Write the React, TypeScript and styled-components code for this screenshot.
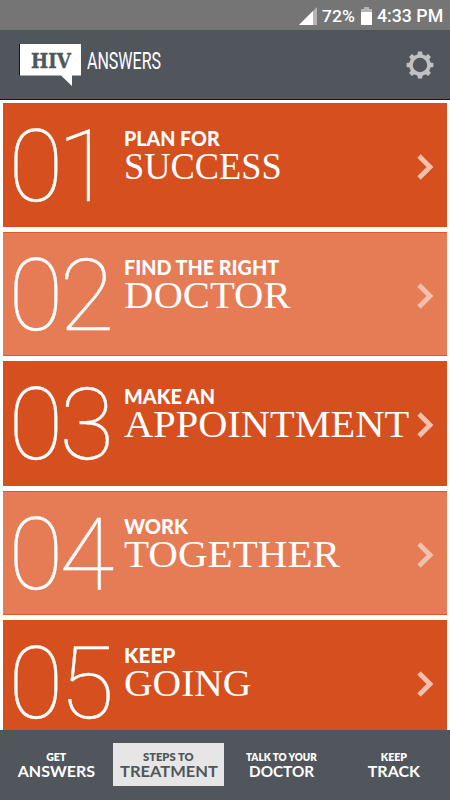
import React, { useLayoutEffect, useRef, useState } from "react";
import styled, { createGlobalStyle } from "styled-components";

const GlobalStyle = createGlobalStyle`
  * { box-sizing: border-box; }
  body { margin: 0; background: #fff; overflow: hidden; }
`;

const Screen = styled.div`
  width: 450px;
  height: 800px;
  overflow: hidden;
  display: flex;
  flex-direction: column;
  background: #fff;
  font-family: Lato, sans-serif;
  color: #fff;
`;

const StatusBar = styled.div`
  flex: none;
  height: 30px;
  padding: 2px 7px 0 0;
  background: #757575;
  display: flex;
  align-items: center;
  justify-content: flex-end;
`;

const StatusText = styled.span<{ $size: number; $left: number }>`
  font: 500 ${(p) => p.$size}px/26px Roboto, sans-serif;
  margin-left: ${(p) => p.$left}px;
  white-space: nowrap;
`;

const BatteryIcon = styled.svg`
  margin-left: 6px;
`;

const Header = styled.header`
  flex: none;
  height: 70px;
  padding: 13px 16px 0 19px;
  background: #51565c;
  border-bottom: 1px solid #101828;
  display: flex;
  align-items: flex-start;
`;

const Bubble = styled.div`
  position: relative;
  width: 62px;
  height: 44px;
  padding: 7px 0 0 12px;
`;

const BubbleShape = styled.svg`
  position: absolute;
  left: 0;
  top: 0;
`;

const BrandShort = styled.div`
  position: relative;
  color: #51565c;
  font: 700 20px/22px "DejaVu Serif", serif;
  -webkit-text-stroke: 0.4px #51565c;
`;

const BrandName = styled.div`
  margin: 4px 0 0 6px;
  font: 400 24px/29px Roboto, sans-serif;
`;

const GearButton = styled.button`
  margin: 8px 0 0 auto;
  padding: 0;
  border: 0;
  background: none;
  width: 28px;
  height: 28px;
`;

const Steps = styled.main`
  flex: 1;
  min-height: 0;
  overflow: hidden;
  padding: 2.5px 3px 0;
  display: flex;
  flex-direction: column;
  gap: 5px;
`;

const Card = styled.section<{ $light: boolean }>`
  flex: none;
  height: 124.4px;
  background: ${(p) => (p.$light ? "#e67c55" : "#d64f1e")};
  border: 0 solid #df5a22;
  border-width: ${(p) => (p.$light ? "1px 0" : "0")};
  display: flex;
  padding: ${(p) => (p.$light ? "0" : "1px")} 0;
`;

const Digits = styled.div`
  width: 121px;
  padding: 4px 0 0 5.5px;
  display: flex;
  font: 100 100px/117px Roboto, sans-serif;
`;

const Digit = styled.span<{ $narrow: boolean }>`
  width: 51px;
  margin-left: ${(p) => (p.$narrow ? -2 : 0)}px;
  -webkit-text-stroke: 0.4px #fff;
`;

const Copy = styled.div`
  flex: 1;
  padding-top: 23px;
`;

const Kicker = styled.div`
  font: 900 20px/22px Lato, sans-serif;
`;

const Title = styled.div`
  margin-top: -3px;
  font: 400 38px/40px "Liberation Serif", serif;
`;

const Chevron = styled.svg`
  flex: none;
  margin: 49px 13px 0 0;
`;

const Nav = styled.nav`
  flex: none;
  height: 70px;
  background: #51565c;
  display: grid;
  grid-template-columns: 112.5px 112.5px 112.5px 112.5px;
  align-items: start;
  justify-items: center;
  padding-top: 12.5px;
`;

const NavItem = styled.div<{ $active: boolean }>`
  width: 111px;
  height: 43.5px;
  padding-top: 8px;
  display: flex;
  flex-direction: column;
  align-items: center;
  background: ${(p) => (p.$active ? "#e6e6e6" : "transparent")};
  color: ${(p) => (p.$active ? "#51565c" : "#fff")};
`;

const NavSmall = styled.div`
  font: 800 10.5px/12px Lato, sans-serif;
`;

const NavLarge = styled.div`
  font: 700 16px/16px Lato, sans-serif;
`;

const FitFrame = styled.span<{ $width: number }>`
  display: block;
  width: ${(p) => p.$width}px;
`;

const FitText = styled.span`
  display: inline-block;
  white-space: nowrap;
  transform-origin: left center;
`;

/** Stretches or condenses one line of text to an exact width. */
function Fit({ width, children }: { width: number; children: React.ReactNode }) {
  const ref = useRef<HTMLSpanElement>(null);
  const [scale, setScale] = useState(1);
  useLayoutEffect(() => {
    if (ref.current && ref.current.offsetWidth) setScale(width / ref.current.offsetWidth);
  }, [width, children]);
  return (
    <FitFrame $width={width}>
      <FitText ref={ref} style={{ transform: `scaleX(${scale})` }}>
        {children}
      </FitText>
    </FitFrame>
  );
}

const steps = [
  { n: "01", kicker: "PLAN FOR", kw: 96, title: "SUCCESS", tw: 158 },
  { n: "02", kicker: "FIND THE RIGHT", kw: 155, title: "DOCTOR", tw: 167 },
  { n: "03", kicker: "MAKE AN", kw: 91, title: "APPOINTMENT", tw: 285 },
  { n: "04", kicker: "WORK", kw: 64, title: "TOGETHER", tw: 216 },
  { n: "05", kicker: "KEEP", kw: 51, title: "GOING", tw: 127 },
];

const tabs = [
  { small: "GET", sw: 20, large: "ANSWERS", lw: 77 },
  { small: "STEPS TO", sw: 51, large: "TREATMENT", lw: 98 },
  { small: "TALK TO YOUR", sw: 71, large: "DOCTOR", lw: 65 },
  { small: "KEEP", sw: 26, large: "TRACK", lw: 52 },
];

const teeth = [0, 45, 90, 135, 180, 225, 270, 315];

export default function App() {
  return (
    <Screen>
      <GlobalStyle />
      <StatusBar>
        <svg width="18" height="18" viewBox="0 0 18 18">
          <path d="M18 0V18H0Z" fill="#b5b5b5" />
          <path d="M14 4V18H0Z" fill="#fff" />
        </svg>
        <StatusText $size={17} $left={5}>
          <Fit width={33}>72%</Fit>
        </StatusText>
        <BatteryIcon width="11" height="18" viewBox="0 0 11 18">
          <path d="M3 0H8V2H11V6H0V2H3Z" fill="#b5b5b5" />
          <path d="M0 5H11V18H0Z" fill="#fff" />
        </BatteryIcon>
        <StatusText $size={18} $left={5}>
          <Fit width={66}>4:33 PM</Fit>
        </StatusText>
      </StatusBar>
      <Header>
        <Bubble>
          <BubbleShape width="62" height="44" viewBox="0 0 62 44">
            <path d="M1 1H62V32.5H53V43L42 32.5H1Z" fill="#fff" />
            <path d="M0.5 1V32.5" stroke="#101828" />
          </BubbleShape>
          <BrandShort>
            <Fit width={40}>HIV</Fit>
          </BrandShort>
        </Bubble>
        <BrandName>
          <Fit width={74}>ANSWERS</Fit>
        </BrandName>
        <GearButton aria-label="Settings">
          <svg width="28" height="28" viewBox="-14 -14 28 28">
            <circle r="9" fill="none" stroke="#bfc1c3" strokeWidth="3.6" />
            {teeth.map((a) => (
              <path key={a} d="M-2.6 -9.5L-2.1 -13.4H2.1L2.6 -9.5Z" fill="#bfc1c3" transform={`rotate(${a})`} />
            ))}
          </svg>
        </GearButton>
      </Header>
      <Steps>
        {steps.map((s, i) => (
          <Card key={s.n} $light={i % 2 === 1}>
            <Digits>
              {s.n.split("").map((d, k) => (
                <Digit key={k} $narrow={d === "1"}>
                  <Fit width={55}>{d}</Fit>
                </Digit>
              ))}
            </Digits>
            <Copy>
              <Kicker>
                <Fit width={s.kw}>{s.kicker}</Fit>
              </Kicker>
              <Title>
                <Fit width={s.tw}>{s.title}</Fit>
              </Title>
            </Copy>
            <Chevron width="17" height="28" viewBox="0 0 17 28">
              <path d="M2 3L13 14L2 25" fill="none" stroke="#f3c0ad" strokeWidth="4.8" />
            </Chevron>
          </Card>
        ))}
      </Steps>
      <Nav>
        {tabs.map((t, i) => (
          <NavItem key={t.large} $active={i === 1}>
            <NavSmall>
              <Fit width={t.sw}>{t.small}</Fit>
            </NavSmall>
            <NavLarge>
              <Fit width={t.lw}>{t.large}</Fit>
            </NavLarge>
          </NavItem>
        ))}
      </Nav>
    </Screen>
  );
}
